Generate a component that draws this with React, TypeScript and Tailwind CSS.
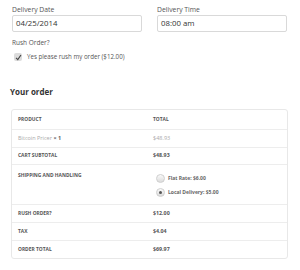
const rows = [
  { label: "RUSH ORDER?", value: "$12.00" },
  { label: "TAX", value: "$4.04" },
  { label: "ORDER TOTAL", value: "$69.97" },
];

const Radio = ({ checked }: { checked?: boolean }) => (
  <span className="w-[9px] h-[9px] rounded-full border border-[#cfcfcf] bg-gradient-to-b from-[#fafafa] to-[#dcdcdc] flex items-center justify-center shrink-0">
    {checked && <span className="w-[3px] h-[3px] rounded-full bg-[#555]" />}
  </span>
);

export default function App() {
  return (
    <div className="w-[300px] h-[270px] bg-white overflow-hidden font-['Open_Sans',sans-serif]">
      {/* Delivery fields */}
      <div className="flex gap-[15px] pl-[12px] pt-[6px]">
        <div className="w-[130px]">
          <div className="text-[6.8px] leading-[8px] text-[#555]">Delivery Date</div>
          <div className="mt-[1px] h-[17px] border border-[#d9d9d9] rounded-[2px] flex items-center pl-[3px] text-[7.8px] text-[#333]">
            04/25/2014
          </div>
        </div>
        <div className="w-[130px]">
          <div className="text-[6.8px] leading-[8px] text-[#555]">Delivery Time</div>
          <div className="mt-[1px] h-[17px] border border-[#d9d9d9] rounded-[2px] flex items-center pl-[3px] text-[7.8px] text-[#333]">
            08:00 am
          </div>
        </div>
      </div>

      {/* Rush order */}
      <div className="pl-[12px] mt-[7px]">
        <div className="text-[6.5px] leading-[8px] text-[#555]">Rush Order?</div>
        <div className="flex items-center mt-[6px] pl-[2px] gap-[5px]">
          <span className="w-[8px] h-[8px] rounded-[2px] bg-[#dcdcdc] flex items-center justify-center">
            <svg viewBox="0 0 10 10" className="w-[7px] h-[7px]">
              <path d="M1.5 5.5 L4 8 L8.5 1.5" fill="none" stroke="#444" strokeWidth="1.6" />
            </svg>
          </span>
          <span className="text-[6.2px] leading-[8px] text-[#555]">Yes please rush my order ($12.00)</span>
        </div>
      </div>

      {/* Your order */}
      <div className="pl-[10px] mt-[26px] text-[8px] leading-[10px] font-bold text-[#333]">Your order</div>

      <div className="ml-[11px] mt-[12px] w-[277px] border border-[#e8e8e8] rounded-[3px] text-[4.9px] font-bold text-[#555]">
        <div className="flex h-[19px] items-center">
          <div className="w-[135px] pl-[6px]">PRODUCT</div>
          <div className="pl-[6px]">TOTAL</div>
        </div>
        <div className="flex h-[18px] items-center border-t border-[#ededed] text-[#aaa] text-[5.5px] font-normal">
          <div className="w-[135px] pl-[6px]">
            Bitcoin Pricer <span className="font-bold text-[#666]">× 1</span>
          </div>
          <div className="pl-[6px]">$48.93</div>
        </div>
        <div className="flex h-[17px] items-center border-t border-[#ededed]">
          <div className="w-[135px] pl-[6px]">CART SUBTOTAL</div>
          <div className="pl-[6px] text-[5.3px]">$48.93</div>
        </div>
        <div className="flex h-[40px] border-t border-[#ededed]">
          <div className="w-[135px] pl-[6px] pt-[7px]">SHIPPING AND HANDLING</div>
          <div className="pl-[9px] pt-[9px] flex flex-col gap-[5px] text-[5px] text-[#666]">
            <div className="flex items-center gap-[3px]">
              <Radio />
              <span>Flat Rate: $6.00</span>
            </div>
            <div className="flex items-center gap-[3px]">
              <Radio checked />
              <span>Local Delivery: $5.00</span>
            </div>
          </div>
        </div>
        {rows.map((r) => (
          <div key={r.label} className="flex h-[18px] items-center border-t border-[#ededed]">
            <div className="w-[135px] pl-[6px]">{r.label}</div>
            <div className="pl-[6px] text-[5.3px]">{r.value}</div>
          </div>
        ))}
      </div>
    </div>
  );
}
